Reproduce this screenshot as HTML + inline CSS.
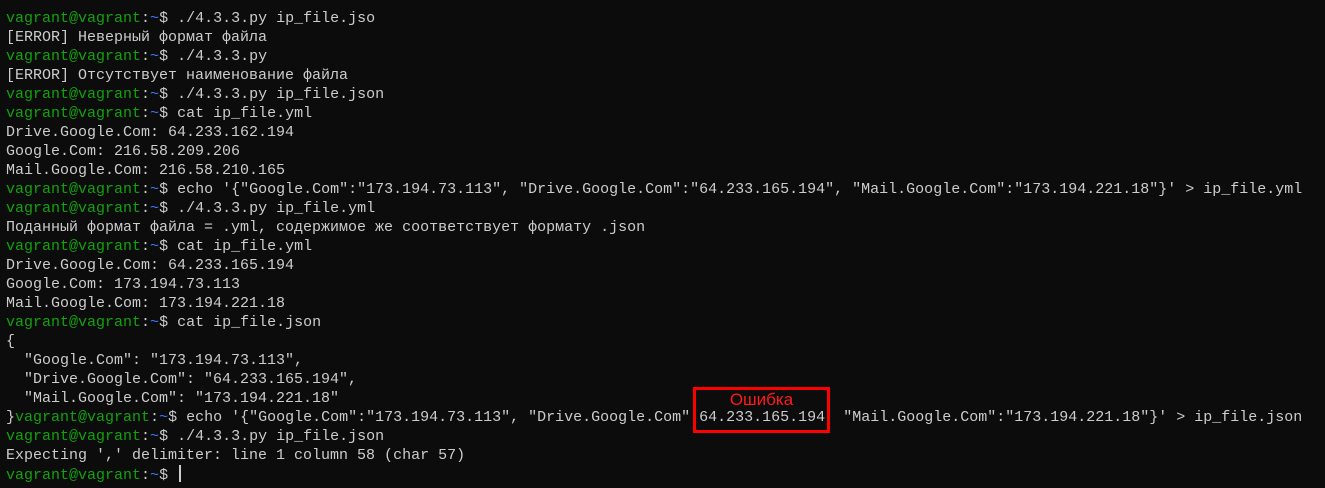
<!DOCTYPE html>
<html><head><meta charset="utf-8"><style>
html,body{margin:0;padding:0;background:#0c0c0c;width:1325px;height:488px;overflow:hidden}
pre{margin:0;padding:9px 0 0 6px;font-family:"Liberation Mono","DejaVu Sans Mono",monospace;font-size:15px;line-height:19px;color:#cccccc;white-space:pre}
.g{color:#13a10e}
.b{color:#3b78ff}
.cur{display:inline-block;width:2px;height:17px;background:#ccc;vertical-align:-3px;margin-left:2px}
.box{position:absolute;left:693px;top:387px;width:131px;height:40px;border:3px solid #ff0000}
.lbl{position:absolute;left:693px;top:391px;width:137px;text-align:center;color:#ff1a1a;font-family:"Liberation Sans",sans-serif;font-size:17px;line-height:18px}
</style></head><body>
<pre><span class="g">vagrant@vagrant</span>:<span class="b">~</span>$ ./4.3.3.py ip_file.jso
[ERROR] Неверный формат файла
<span class="g">vagrant@vagrant</span>:<span class="b">~</span>$ ./4.3.3.py
[ERROR] Отсутствует наименование файла
<span class="g">vagrant@vagrant</span>:<span class="b">~</span>$ ./4.3.3.py ip_file.json
<span class="g">vagrant@vagrant</span>:<span class="b">~</span>$ cat ip_file.yml
Drive.Google.Com: 64.233.162.194
Google.Com: 216.58.209.206
Mail.Google.Com: 216.58.210.165
<span class="g">vagrant@vagrant</span>:<span class="b">~</span>$ echo '{"Google.Com":"173.194.73.113", "Drive.Google.Com":"64.233.165.194", "Mail.Google.Com":"173.194.221.18"}' &gt; ip_file.yml
<span class="g">vagrant@vagrant</span>:<span class="b">~</span>$ ./4.3.3.py ip_file.yml
Поданный формат файла = .yml, содержимое же соответствует формату .json
<span class="g">vagrant@vagrant</span>:<span class="b">~</span>$ cat ip_file.yml
Drive.Google.Com: 64.233.165.194
Google.Com: 173.194.73.113
Mail.Google.Com: 173.194.221.18
<span class="g">vagrant@vagrant</span>:<span class="b">~</span>$ cat ip_file.json
{
  "Google.Com": "173.194.73.113",
  "Drive.Google.Com": "64.233.165.194",
  "Mail.Google.Com": "173.194.221.18"
}<span class="g">vagrant@vagrant</span>:<span class="b">~</span>$ echo '{"Google.Com":"173.194.73.113", "Drive.Google.Com" 64.233.165.194  "Mail.Google.Com":"173.194.221.18"}' &gt; ip_file.json
<span class="g">vagrant@vagrant</span>:<span class="b">~</span>$ ./4.3.3.py ip_file.json
Expecting ',' delimiter: line 1 column 58 (char 57)
<span class="g">vagrant@vagrant</span>:<span class="b">~</span>$ <span class="cur"></span></pre>
<div class="box"></div>
<div class="lbl">Ошибка</div>
</body></html>
